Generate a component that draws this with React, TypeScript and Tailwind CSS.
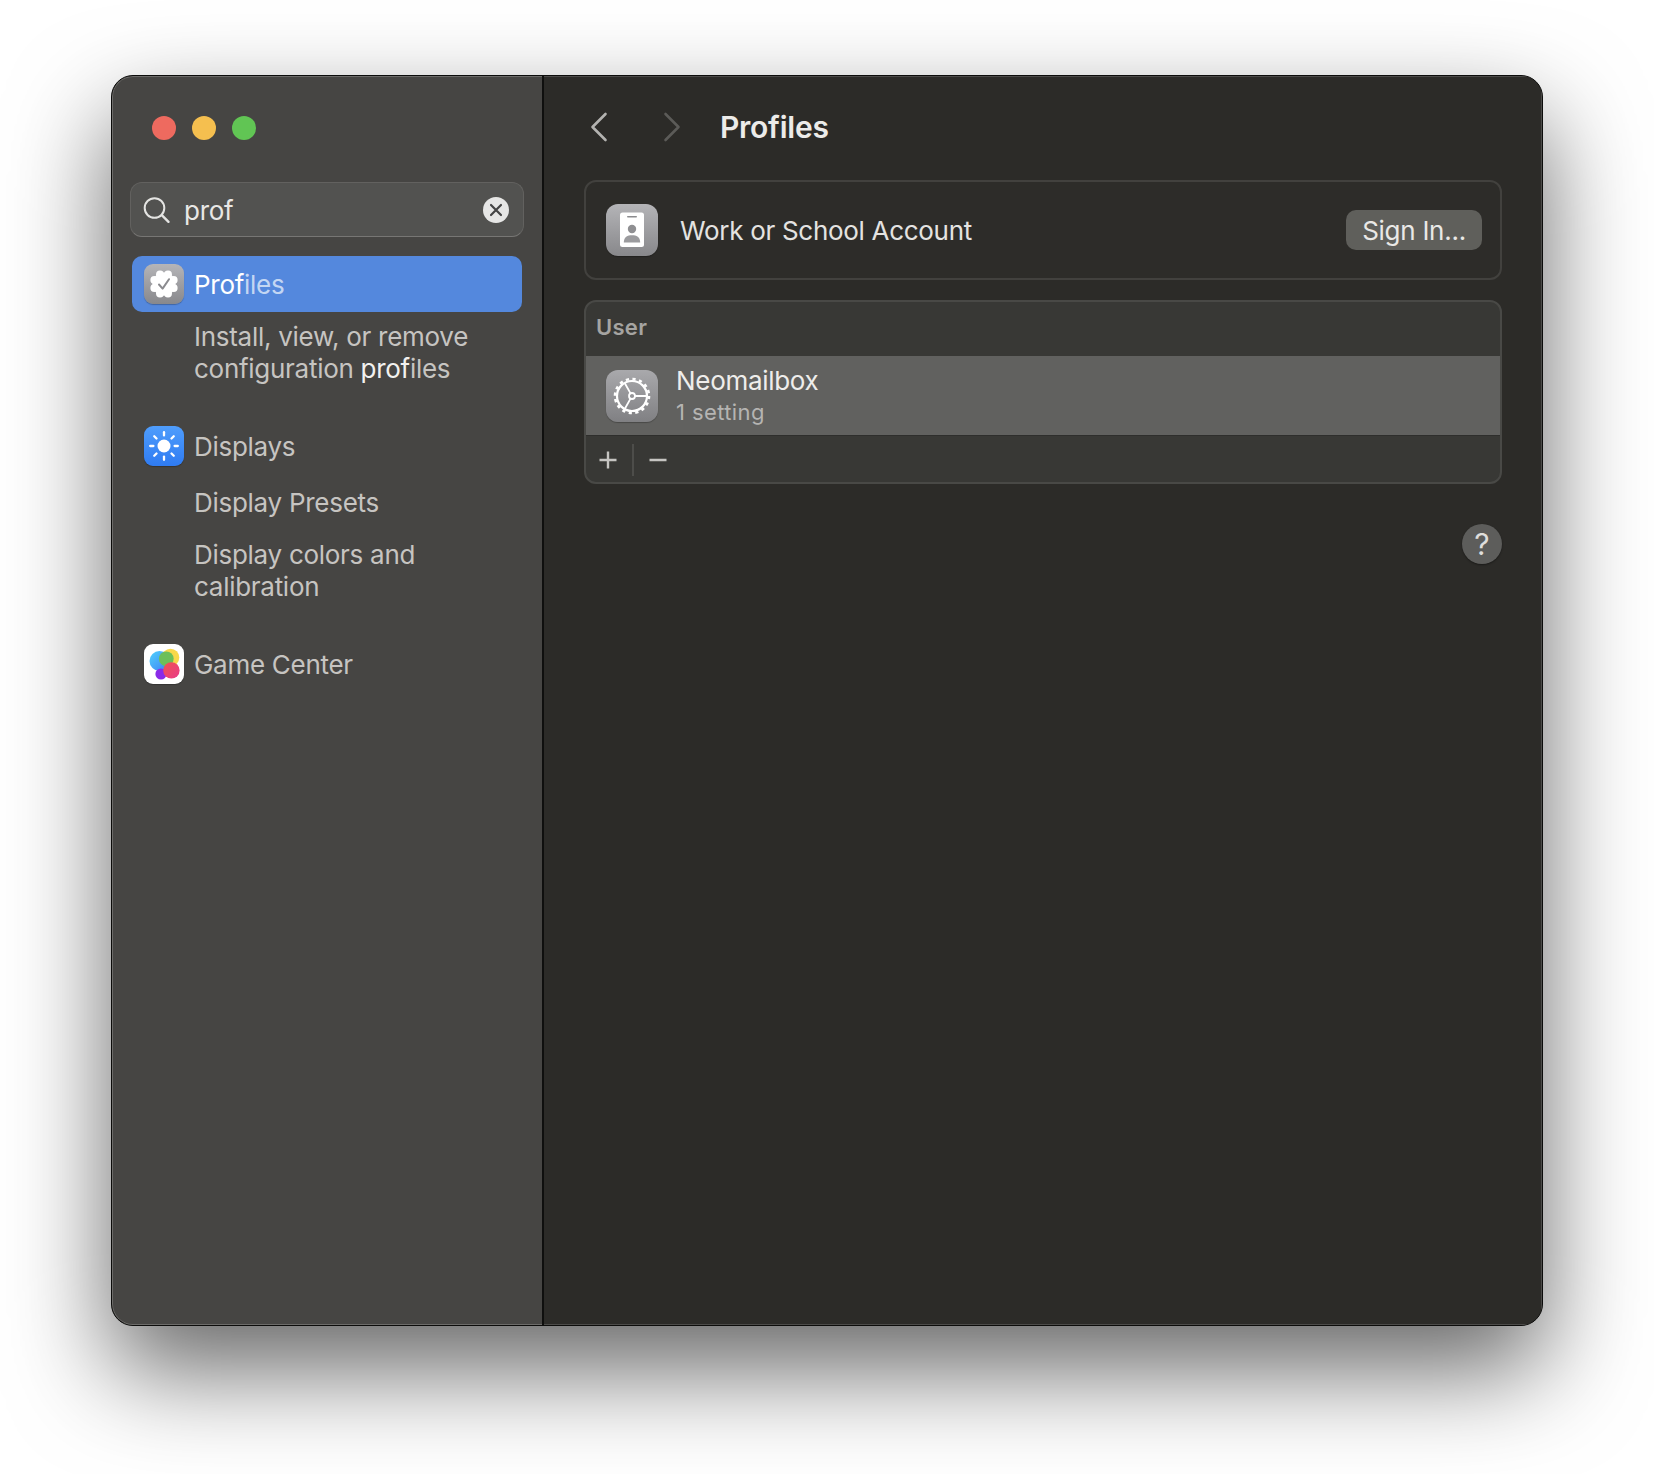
import React from "react";

const font = { fontFamily: "Inter, 'Liberation Sans', sans-serif" };

function Tile({ children, className }: { children: React.ReactNode; className: string }) {
  return <div className={"shrink-0 overflow-hidden shadow-[0_1px_1px_rgba(0,0,0,0.25)] " + className}>{children}</div>;
}

function BadgeIcon() {
  const lobes = Array.from({ length: 8 }, (_, i) => {
    const a = (i * Math.PI) / 4 + Math.PI / 8;
    return { x: 20 + 10.4 * Math.cos(a), y: 20 + 10.4 * Math.sin(a) };
  });
  return (
    <Tile className="w-10 h-10 rounded-[9px] bg-gradient-to-b from-[#b5b5b8] to-[#88888c]">
      <svg viewBox="0 0 40 40" className="w-10 h-10">
        <circle cx="20" cy="20" r="11.5" fill="#fff" />
        {lobes.map((l, i) => (
          <circle key={i} cx={l.x} cy={l.y} r="4" fill="#fff" />
        ))}
        <path d="M15 20.5 L18.6 24.6 L25 15.2" fill="none" stroke="#8b8b8f" strokeWidth="2" strokeLinecap="round" strokeLinejoin="round" />
      </svg>
    </Tile>
  );
}

function SunIcon() {
  const rays = Array.from({ length: 8 }, (_, i) => {
    const a = (i * Math.PI) / 4;
    return {
      x1: 20 + 10.6 * Math.cos(a),
      y1: 20 + 10.6 * Math.sin(a),
      x2: 20 + 13.8 * Math.cos(a),
      y2: 20 + 13.8 * Math.sin(a),
    };
  });
  return (
    <Tile className="w-10 h-10 rounded-[9px] bg-gradient-to-b from-[#4f9dfc] to-[#2f7bf2]">
      <svg viewBox="0 0 40 40" className="w-10 h-10">
        <circle cx="20" cy="20" r="6.5" fill="#fff" />
        {rays.map((r, i) => (
          <line key={i} {...r} stroke="#fff" strokeWidth="2.3" strokeLinecap="round" />
        ))}
      </svg>
    </Tile>
  );
}

function GameIcon() {
  return (
    <Tile className="w-10 h-10 rounded-[9px] bg-white">
      <svg viewBox="0 0 40 40" className="w-10 h-10">
        <defs>
          <linearGradient id="gcBlue" x1="0" y1="0" x2="1" y2="1">
            <stop offset="0" stopColor="#4fd2fb" />
            <stop offset="1" stopColor="#3f7cf6" />
          </linearGradient>
          <linearGradient id="gcRed" x1="0" y1="0" x2="1" y2="1">
            <stop offset="0" stopColor="#ef5350" />
            <stop offset="1" stopColor="#e93a8a" />
          </linearGradient>
        </defs>
        <circle cx="26.5" cy="13.5" r="8.8" fill="#f8d84a" />
        <circle cx="15.5" cy="17" r="10" fill="url(#gcBlue)" />
        <circle cx="17" cy="30" r="5.6" fill="#8a2be8" />
        <circle cx="22.3" cy="14.8" r="7.4" fill="#6cbf5a" />
        <circle cx="27.4" cy="26.4" r="8.2" fill="url(#gcRed)" />
      </svg>
    </Tile>
  );
}

function IdIcon() {
  return (
    <Tile className="w-[52px] h-[52px] rounded-[12px] bg-gradient-to-b from-[#b4b4b7] to-[#88888b]">
      <svg viewBox="0 0 52 52" className="w-[52px] h-[52px]">
        <rect x="14" y="8.5" width="24" height="34.5" rx="2.5" fill="#fff" />
        <rect x="21" y="12" width="10" height="1.6" rx="0.8" fill="#8b8b8e" />
        <circle cx="26" cy="25" r="4.2" fill="#8f8f92" />
        <path d="M17.8 38.5 C17.8 33 21.5 31.2 26 31.2 C30.5 31.2 34.2 33 34.2 38.5 Z" fill="#9b9b9e" />
      </svg>
    </Tile>
  );
}

function GearIcon() {
  return (
    <Tile className="w-[52px] h-[52px] rounded-[12px] bg-gradient-to-b from-[#a9a9ac] to-[#808083]">
      <svg viewBox="0 0 52 52" className="w-[52px] h-[52px]">
        <circle cx="26" cy="26" r="17" fill="none" stroke="#fff" strokeWidth="2.6" strokeDasharray="3.2 3.47" />
        <circle cx="26" cy="26" r="15" fill="none" stroke="#fff" strokeWidth="2.2" />
        <circle cx="26" cy="26" r="3" fill="none" stroke="#fff" strokeWidth="1.8" />
        <path d="M29 26 H40 M24.5 23.4 L19 13.5 M24.5 28.6 L19 38.5" stroke="#fff" strokeWidth="1.8" strokeLinecap="round" />
      </svg>
    </Tile>
  );
}

export default function App() {
  return (
    <div className="w-[1654px] h-[1474px] bg-white overflow-hidden pt-[75px] pl-[111px]" style={font}>
      <div className="w-[1432px] h-[1251px] flex rounded-[22px] overflow-hidden border border-[#0c0c0b] bg-[#2c2b28] shadow-[0_44px_100px_rgba(0,0,0,0.6)]">
        <aside className="w-[430px] shrink-0 h-full bg-[#464543] rounded-l-[21px] border-l border-t border-b border-[#6c6b69] text-[#c6c4c1] text-[26px] leading-[32px] tracking-[-0.28px] flex flex-col">
          <div className="flex gap-4 ml-[39px] mt-[39px]">
            <div className="w-6 h-6 rounded-full bg-[#ee6a5f]" />
            <div className="w-6 h-6 rounded-full bg-[#f5bf4f]" />
            <div className="w-6 h-6 rounded-full bg-[#61c554]" />
          </div>
          <div className="ml-[17px] mt-[42px] w-[394px] h-[55px] rounded-[12px] bg-[#525250] border border-[#62615f] border-b-[#777674] flex items-center pl-[12px] pr-[14px]">
            <svg viewBox="0 0 28 28" className="w-7 h-7 shrink-0 text-[#e4e4e2]" fill="none" stroke="currentColor" strokeWidth="2" strokeLinecap="round">
              <circle cx="11.5" cy="12" r="9.8" />
              <path d="M18.8 19.2 L25.5 25.8" strokeWidth="2.4" />
            </svg>
            <span className="ml-[13px] flex-1 pt-[2px] text-[#e8e7e5]">prof</span>
            <div className="w-[26px] h-[26px] rounded-full bg-[#e6e6e5] flex items-center justify-center">
              <svg viewBox="0 0 14 14" className="w-[14px] h-[14px]" fill="none" stroke="#444" strokeWidth="2.2" strokeLinecap="round">
                <path d="M2 2 L12 12 M12 2 L2 12" />
              </svg>
            </div>
          </div>

          <div className="ml-[19px] mt-[19px] w-[390px] h-[56px] rounded-[10px] bg-[#5488dd] flex items-center pl-3 gap-[10px] text-white">
            <BadgeIcon />
            <span className="pt-[2px]">
              Prof<span className="text-[#c3d6f3]">iles</span>
            </span>
          </div>
          <div className="ml-[81px] mt-[9px] w-[330px]">
            Install, view, or remove
            <br />
            configuration <span className="text-[#f2f1ef]">prof</span>iles
          </div>

          <div className="ml-[31px] mt-[41px] flex items-center gap-[10px]">
            <SunIcon />
            <span className="pt-[2px]">Displays</span>
          </div>
          <div className="ml-[81px] mt-[21px]">Display Presets</div>
          <div className="ml-[81px] mt-[20px]">
            Display colors and
            <br />
            calibration
          </div>
          <div className="ml-[31px] mt-[41px] flex items-center gap-[10px]">
            <GameIcon />
            <span className="pt-[2px]">Game Center</span>
          </div>
        </aside>

        <div className="w-[2px] shrink-0 bg-[#0f0f0e]" />

        <main className="flex-1 min-w-0 pl-[40px] pr-[39px] flex flex-col bg-[#2c2b28] border-t border-r border-b border-[#4c4b49]">
          <header className="h-[103px] shrink-0 flex items-start">
            <div className="flex mt-[35px] ml-[6px]">
              <svg viewBox="0 0 18 30" className="w-[18px] h-[30px]" fill="none" stroke="#b4b3b0" strokeWidth="2.6" strokeLinecap="round" strokeLinejoin="round">
                <path d="M15.5 2 L2.5 15 L15.5 28" />
              </svg>
              <svg viewBox="0 0 18 30" className="w-[18px] h-[30px] ml-[55px]" fill="none" stroke="#5c5b58" strokeWidth="2.6" strokeLinecap="round" strokeLinejoin="round">
                <path d="M2.5 2 L15.5 15 L2.5 28" />
              </svg>
            </div>
            <h1 className="ml-[39px] mt-[32px] text-[30px] leading-[36px] font-semibold text-[#ecebe9] tracking-[-0.25px]">Profiles</h1>
          </header>

          <section className="h-[100px] shrink-0 rounded-[12px] border-2 border-[#42413e] flex items-center pl-[20px] pr-[18px] bg-[#2d2c29]">
            <IdIcon />
            <span className="ml-[22px] flex-1 text-[26px] text-[#e4e3e1] tracking-[-0.3px]">Work or School Account</span>
            <button className="w-[136px] h-10 rounded-[10px] bg-[#5f5f5b] text-[26px] text-[#e9e8e6] tracking-[-0.27px] flex items-center justify-center">
              Sign In...
            </button>
          </section>

          <section className="mt-5 h-[184px] shrink-0 rounded-[12px] border-2 border-[#494946] overflow-hidden bg-[#383835] flex flex-col">
            <div className="h-[54px] shrink-0 flex items-center pl-[10px] pb-[3px] text-[22px] font-semibold text-[#a5a4a1] tracking-[0.3px]">User</div>
            <div className="h-[80px] shrink-0 bg-[#61615f] border-b border-[#2e2e2c] flex items-center pl-[20px]">
              <GearIcon />
              <div className="ml-[18px] flex flex-col pt-[1px]">
                <span className="text-[26px] leading-[32px] text-[#eeedeb] tracking-[-0.3px]">Neomailbox</span>
                <span className="text-[22px] leading-[30px] text-[#b5b4b2] tracking-[0.4px]">1 setting</span>
              </div>
            </div>
            <div className="flex-1 flex items-center pl-[12px] pt-[2px]">
              <svg viewBox="0 0 20 20" className="w-5 h-5 text-[#c6c5c2]" fill="none" stroke="currentColor" strokeWidth="2.4">
                <path d="M10 1.5 V18.5 M1.5 10 H18.5" />
              </svg>
              <div className="ml-[14px] w-[2px] h-8 bg-[#4d4d4a]" />
              <svg viewBox="0 0 20 20" className="ml-[14px] w-5 h-5 text-[#c6c5c2]" fill="none" stroke="currentColor" strokeWidth="2.4">
                <path d="M1.5 10 H18.5" />
              </svg>
            </div>
          </section>

          <div className="mt-10 self-end w-10 h-10 rounded-full bg-[#5d5d5b] shadow-[0_1px_2px_rgba(0,0,0,0.4)] flex items-center justify-center text-[30px] leading-none text-[#dfdedc]">?</div>
        </main>
      </div>
    </div>
  );
}
